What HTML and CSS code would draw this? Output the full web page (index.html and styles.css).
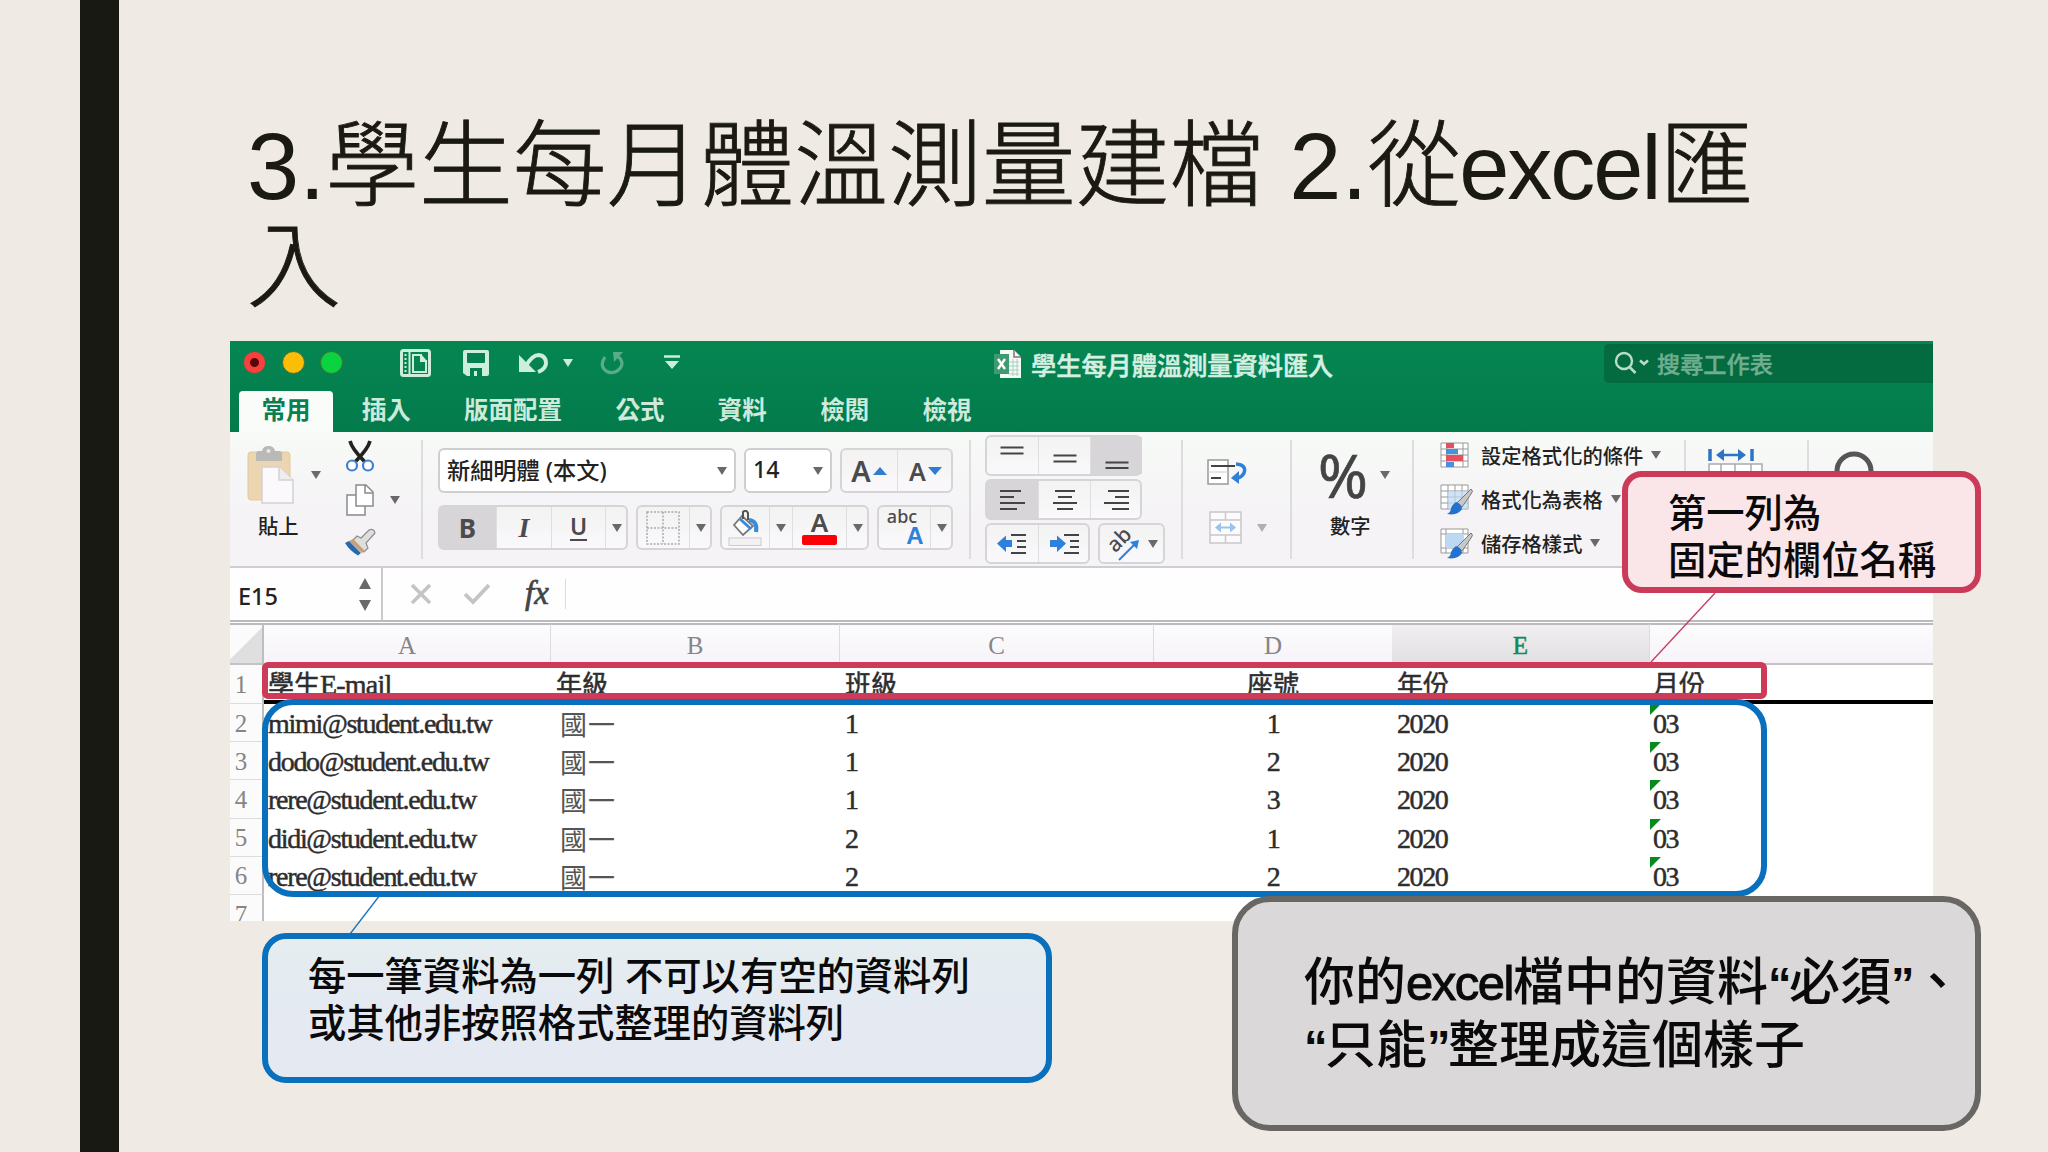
FILE: index.html
```html
<!DOCTYPE html>
<html lang="zh-Hant">
<head>
  <meta charset="UTF-8">
  <meta name="viewport" content="width=device-width, initial-scale=1.0">
  <title>學生每月體溫測量建檔</title>
  <link rel="stylesheet" href="styles.css">
</head>
<body>
  <div class="slide">
    <div class="side-bar"></div>
    <div class="content">
      <h1><span class="digit">3.</span>學生每月體溫測量建檔 <span class="digit">2.</span>從<span class="latin">excel</span>匯<br>入</h1>

      <div class="excel">
        <div class="titlebar">
          <div class="quick">
            <span class="light red"></span>
            <span class="light yellow"></span>
            <span class="light green"></span>
            <svg class="q-side" width="31" height="28" viewBox="0 0 31 28"><rect x="1.5" y="1.5" width="28" height="25" rx="2" fill="none" stroke="#cdeedd" stroke-width="3"/><path d="M9.5 2v24" stroke="#cdeedd" stroke-width="2"/><path d="M5.5 5v19" stroke="#cdeedd" stroke-width="2" stroke-dasharray="2 2"/><path d="M13 6h8v6h5v11H13z" fill="none" stroke="#cdeedd" stroke-width="2"/><path d="M21 5l6 7h-6z" fill="#cdeedd"/></svg>
            <svg class="q-save" width="28" height="28" viewBox="0 0 28 28"><path d="M3 1h22q2 0 2 2v22q0 2-2 2H5l-4-3V3q0-2 2-2z" fill="#cdeedd"/><path d="M5 4h18v9q0 1-1 1H6q-1 0-1-1z" fill="#04804f"/><path d="M8 19h12v8h-5v-5h-3v5H8z" fill="#04804f"/></svg>
            <svg class="q-undo" width="31" height="22" viewBox="0 0 31 22"><path d="M1 3v17h17z" fill="#cdeedd"/><path d="M8 14Q14 3 21 3q7 1 7 8 0 6-8 9" fill="none" stroke="#cdeedd" stroke-width="4"/></svg>
            <i class="caret light-caret"></i>
            <svg class="q-redo" width="24" height="26" viewBox="0 0 24 26"><path d="M5 7q-5 7-1 12 4 5 11 3 7-3 7-9-1-5-5-7" fill="none" stroke="#57ad86" stroke-width="3.2"/><path d="M13 2h10l-9 10z" fill="#57ad86"/></svg>
            <svg class="q-more" width="16" height="15" viewBox="0 0 16 15"><path d="M0 1.5h16" stroke="#cdeedd" stroke-width="2.5"/><path d="M1 6h14l-7 8z" fill="#cdeedd"/></svg>
          </div>
          <div class="doc-title">
            <svg width="28" height="28" viewBox="0 0 28 28"><path d="M6 0h14l7 7v21H6z" fill="#f4fbf7"/><path d="M20 0v7h7" fill="none" stroke="#8a6f7c" stroke-width="1.5"/><path d="M15 12h10M15 16h10M15 20h10M15 24h10M19 9v17M23 9v17" stroke="#a9cdbb"/><rect y="4" width="15" height="20" fill="#3f9a72"/><path d="M4 9l7 10M11 9L4 19" stroke="#fff" stroke-width="2.4"/></svg>
            <span>學生每月體溫測量資料匯入</span>
          </div>
          <div class="search">
            <svg width="36" height="24" viewBox="0 0 36 24"><circle cx="10" cy="10" r="8" fill="none" stroke="#b9dccb" stroke-width="2.4"/><path d="M15.5 16l6 6M26 9.5l4 3.5 4-3.5" fill="none" stroke="#b9dccb" stroke-width="2.6"/></svg>
            <span>搜尋工作表</span>
          </div>
        </div>
        <div class="tabs">
          <span class="tab active">常用</span>
          <span class="tab">插入</span>
          <span class="tab">版面配置</span>
          <span class="tab">公式</span>
          <span class="tab">資料</span>
          <span class="tab">檢閱</span>
          <span class="tab">檢視</span>
        </div>

        <div class="ribbon">
          <div class="group paste-group">
            <div class="big-button">
              <div class="big-icon">
                <svg width="48" height="60" viewBox="0 0 48 60"><rect x="2" y="7" width="42" height="48" rx="3" fill="#ecd6b1" stroke="#e3c99c"/><path d="M10 16V9q0-3 3-3h3q1-5 6.5-5T29 6h4q3 0 3 3v7z" fill="#b9bab8"/><circle cx="22.5" cy="6" r="2" fill="#e9e9e9"/><path d="M16 22h17l14 13v23H16z" fill="#fbf9fb" stroke="#d3d1d3" stroke-width="1.5"/><path d="M33 22v13h14" fill="#efedef" stroke="#d3d1d3" stroke-width="1.5"/></svg>
                <i class="caret"></i>
              </div>
              <span>貼上</span>
            </div>
            <div class="clip-tools">
              <svg width="30" height="32" viewBox="0 0 30 32"><path d="M5 1Q7 9 20 22M25 1Q23 9 10 22" fill="none" stroke="#222" stroke-width="3.6"/><circle cx="7" cy="25.5" r="5" fill="#fff" stroke="#3d7fd0" stroke-width="2.2"/><circle cx="23" cy="25.5" r="5" fill="#fff" stroke="#3d7fd0" stroke-width="2.2"/></svg>
              <div class="copy">
                <svg width="30" height="32" viewBox="0 0 30 32"><path d="M2 11h12l6 6v14H2z" fill="#fff" stroke="#8b8b8b" stroke-width="1.5"/><path d="M11 1h10l7 7v14H11z" fill="#fff" stroke="#8b8b8b" stroke-width="1.5"/><path d="M20 1v8h8" fill="none" stroke="#8b8b8b" stroke-width="1.5"/></svg>
                <i class="caret"></i>
              </div>
              <svg width="33" height="28" viewBox="0 0 33 28"><path d="M17 10l8-8q5-2 6 3l-9 10 2 5-4 4L9 12l4-4z" fill="#dededc" stroke="#8c8c8c" stroke-width="1.2"/><path d="M9 11l12 12-3 2L5 13z" fill="#c9a074"/><path d="M5 13l12 12-3 2.5Q6 23 1 15z" fill="#2768ae"/></svg>
            </div>
          </div>

          <div class="group font-group">
            <div class="row">
              <div class="field font-name"><span>新細明體 (本文)</span><i class="caret"></i></div>
              <div class="field font-size"><span>14</span><i class="caret"></i></div>
              <div class="buttons">
                <span class="btn w56"><b class="grow">A</b><i class="up"></i></span>
                <span class="btn w56"><b class="shrink">A</b><i class="down"></i></span>
              </div>
            </div>
            <div class="row">
              <div class="buttons">
                <span class="btn w57 on"><b class="biu">B</b></span>
                <span class="btn w55"><b class="biu italic">I</b></span>
                <span class="btn w54"><b class="biu under">U</b></span>
                <span class="btn drop"><i class="caret"></i></span>
              </div>
              <div class="buttons">
                <span class="btn w52"><svg width="34" height="34" viewBox="0 0 34 34"><path d="M1 1h32v32H1zM17 1v32M1 17h32" fill="none" stroke="#aaa" stroke-width="1.5" stroke-dasharray="2 1.5"/></svg></span>
                <span class="btn drop"><i class="caret"></i></span>
              </div>
              <div class="buttons">
                <span class="btn w48"><svg width="34" height="36" viewBox="0 0 34 36"><rect x="1" y="28" width="32" height="7.5" fill="#f3f2f3" stroke="#ccc"/><path d="M14 6l11 10-10 9L6 15z" fill="#fff" stroke="#777" stroke-width="1.8"/><path d="M15 9V2q3-3 5 1v7" fill="none" stroke="#555" stroke-width="2"/><path d="M12 9l11 10" stroke="#398ada" stroke-width="3"/><path d="M21 10q9 1 7 12" fill="none" stroke="#398ada" stroke-width="4"/></svg></span>
                <span class="btn drop split"><i class="caret"></i></span>
                <span class="btn w54 color"><b>A</b><i></i></span>
                <span class="btn drop"><i class="caret"></i></span>
              </div>
              <div class="buttons">
                <span class="btn w52 phonetic"><span>abc</span><b>A</b></span>
                <span class="btn drop"><i class="caret"></i></span>
              </div>
            </div>
          </div>

          <div class="group align-group">
            <div class="buttons">
              <span class="btn w52"><svg width="26" height="24" viewBox="0 0 26 24"><path d="M1.5 3.5h23M1.5 9.500h23"/></svg></span>
              <span class="btn w52"><svg width="26" height="24" viewBox="0 0 26 24"><path d="M1.5 11.5h23M1.5 17.500h23"/></svg></span>
              <span class="btn w52 on"><svg width="26" height="24" viewBox="0 0 26 24"><path d="M1.5 18.5h23M1.5 24h23"/></svg></span>
            </div>
            <div class="buttons">
              <span class="btn w52 on"><svg width="26" height="24" viewBox="0 0 26 24"><path d="M1 3h21M1 9h14M1 15h25M1 21h17"/></svg></span>
              <span class="btn w52"><svg width="26" height="24" viewBox="0 0 26 24"><path d="M3 3h20M6 9h14M1 15h24M5 21h16"/></svg></span>
              <span class="btn w52"><svg width="26" height="24" viewBox="0 0 26 24"><path d="M4 3h21M11 9h14M0 15h25M8 21h17"/></svg></span>
            </div>
            <div class="row">
              <div class="buttons">
                <span class="btn w52"><svg width="30" height="24" viewBox="0 0 30 24"><path d="M14 3h15M20 9h9M20 15h9M14 21h15"/><path class="blue" d="M0 11.5l9-8v4.5h6v7H9v5z"/></svg></span>
                <span class="btn w52"><svg width="30" height="24" viewBox="0 0 30 24"><path d="M14 3h15M20 9h9M20 15h9M14 21h15"/><path class="blue" d="M16 11.5l-9-8v4.5H0v7h7v5z"/></svg></span>
              </div>
              <div class="buttons">
                <span class="btn w66"><span class="rotate">ab</span><svg width="22" height="22" viewBox="0 0 22 22"><path class="arrow" d="M1 21L17 5"/><path class="blue" d="M21 1l-2 9-7-7z"/></svg><i class="caret"></i></span>
              </div>
            </div>
          </div>

          <div class="group wrap-group">
            <svg width="40" height="26" viewBox="0 0 40 26"><path d="M1 1h20v24H1z" fill="#fff" stroke="#999" stroke-width="1.5"/><path d="M1 13h20" stroke="#ccc"/><path d="M4 7h24M4 19h10" stroke="#444" stroke-width="2"/><path d="M29 5q11 1 8 9-2 4-6 5" fill="none" stroke="#2f80da" stroke-width="3.5"/><path d="M24 19l8-7v13z" fill="#2f80da"/></svg>
            <div class="merge">
              <svg width="33" height="33" viewBox="0 0 33 33"><path d="M1 1h31v31H1zM1 9h31M1 24h31M16.5 1v8M16.5 24v8" fill="#fbfbfc" stroke="#c8c8cb" stroke-width="1.5"/><path d="M9 16.5h15" stroke="#9bc2ea" stroke-width="2"/><path d="M6 16.5l6-5v10zM27 16.5l-6-5v10z" fill="#9bc2ea"/></svg>
              <i class="caret faded"></i>
            </div>
          </div>

          <div class="group number-group">
            <div class="big-icon"><span class="percent">%</span><i class="caret"></i></div>
            <span>數字</span>
          </div>

          <div class="group style-group">
            <div class="style-item">
              <svg width="33" height="32" viewBox="0 0 33 32"><path d="M1 4h27v24H1zM1 10h27M1 16h27M1 22h27M7 4v24M23 4v24" fill="#fff" stroke="#999"/><path d="M6 4h8v5H6zM6 16h17v6H6z" fill="#e4505c"/><path d="M6 10h12v5H6zM6 23h8v5H6z" fill="#4b8de0"/></svg>
              <span>設定格式化的條件</span><i class="caret"></i>
            </div>
            <div class="style-item">
              <svg width="33" height="32" viewBox="0 0 33 32"><path d="M1 2h27v24H1zM1 8h27M1 14h27M1 20h27M8 2v24M15 2v24M22 2v24" fill="#fff" stroke="#999"/><path d="M8 8h20v18H8z" fill="#bcd8f3" fill-opacity=".7"/><path d="M31 6q3 2 0 5L22 24l-5-4z" fill="#c8c8c8" stroke="#777"/><path d="M16 19q6 2 6 7-4 7-15 5 4-2 4-6 2-4 5-6z" fill="#2372cf"/></svg>
              <span>格式化為表格</span><i class="caret"></i>
            </div>
            <div class="style-item">
              <svg width="33" height="32" viewBox="0 0 33 32"><path d="M1 2h27v24H1zM1 7h27M1 21h27M6 2v24M23 2v24" fill="#fff" stroke="#999"/><path d="M6 7h18v14H6z" fill="#bcd8f3"/><path d="M31 6q3 2 0 5L22 24l-5-4z" fill="#c8c8c8" stroke="#777"/><path d="M16 19q6 2 6 7-4 7-15 5 4-2 4-6 2-4 5-6z" fill="#2372cf"/></svg>
              <span>儲存格樣式</span><i class="caret"></i>
            </div>
          </div>

          <div class="group cell-group">
            <svg width="56" height="30" viewBox="0 0 56 30"><path d="M2 0v12M44 0v12" stroke="#2e74c4" stroke-width="3.5"/><path d="M14 6h20" stroke="#2e74c4" stroke-width="2.5"/><path d="M8 6l8-6v12zM38 6l-8-6v12z" fill="#2e74c4"/><path d="M1 15h53v15H1zM13 15v15M27 15v15M43 15v15" fill="#fff" stroke="#aaa" stroke-width="1.5"/></svg>
          </div>
          <div class="group edit-group">
            <svg width="40" height="44" viewBox="0 0 40 44"><circle cx="20" cy="20" r="17" fill="none" stroke="#555" stroke-width="5"/></svg>
          </div>
        </div>

        <div class="formula-bar">
          <div class="name-box"><span>E15</span><div class="stepper"><i class="step-up"></i><i class="step-down"></i></div></div>
          <svg width="22" height="22" viewBox="0 0 22 22"><path d="M2 2l18 18M20 2L2 20" stroke="#c5c3c5" stroke-width="3.5"/></svg>
          <svg class="check" width="26" height="22" viewBox="0 0 26 22"><path d="M1 11l8 8L25 2" fill="none" stroke="#c5c3c5" stroke-width="3.8"/></svg>
          <span class="fx">fx</span>
        </div>

        <table class="sheet">
          <colgroup><col class="c-num"><col class="c-a"><col class="c-b"><col class="c-c"><col class="c-d"><col class="c-e"><col></colgroup>
          <thead>
            <tr><th class="corner"></th><th>A</th><th>B</th><th>C</th><th class="no-line">D</th><th class="selected">E</th><th></th></tr>
          </thead>
          <tbody>
            <tr class="names"><th>1</th><td>學生<span class="mail">E-mail</span></td><td>年級</td><td>班級</td><td class="mid">座號</td><td>年份</td><td>月份</td></tr>
            <tr><th>2</th><td>mimi@student.edu.tw</td><td class="grade">國一</td><td>1</td><td class="mid">1</td><td>2020</td><td class="flag">03</td></tr>
            <tr><th>3</th><td>dodo@student.edu.tw</td><td class="grade">國一</td><td>1</td><td class="mid">2</td><td>2020</td><td class="flag">03</td></tr>
            <tr><th>4</th><td>rere@student.edu.tw</td><td class="grade">國一</td><td>1</td><td class="mid">3</td><td>2020</td><td class="flag">03</td></tr>
            <tr><th>5</th><td>didi@student.edu.tw</td><td class="grade">國一</td><td>2</td><td class="mid">1</td><td>2020</td><td class="flag">03</td></tr>
            <tr><th>6</th><td>rere@student.edu.tw</td><td class="grade">國一</td><td>2</td><td class="mid">2</td><td>2020</td><td class="flag">03</td></tr>
            <tr><th>7</th><td></td><td></td><td></td><td></td><td></td><td></td></tr>
          </tbody>
        </table>
      </div>
    </div>

    <!-- annotations laid over the sheet -->
    <svg class="leaders" width="2048" height="1152" viewBox="0 0 2048 1152">
      <path d="M1715 593L1651 662" stroke="#c53d5c" stroke-width="1.3"/>
      <path d="M380 895L350 934" stroke="#1a74bb" stroke-width="1.3"/>
    </svg>
    <div class="frame frame-red"></div>
    <div class="frame frame-blue"></div>
    <div class="callout callout-red">第一列為<br>固定的欄位名稱</div>
    <div class="callout callout-blue">每一筆資料為一列 不可以有空的資料列<br>或其他非按照格式整理的資料列</div>
    <div class="callout callout-gray">你的<span class="latin">excel</span>檔中的資料<q>“</q>必須<q>”</q>、<br><q>“</q>只能<q>”</q>整理成這個樣子</div>
  </div>
</body>
</html>
```
FILE: styles.css
```css
* {
  box-sizing: border-box;
}
body {
  margin: 0;
  font-family: "Noto Sans", "Noto Sans CJK TC", sans-serif;
}
.slide {
  position: relative;
  display: flex;
  width: 2048px;
  height: 1152px;
  padding-left: 80px;
  background: #efebe4;
  overflow: hidden;
}
.side-bar {
  width: 39px;
  background: #171912;
}
.content {
  padding: 117px 0 0 111px;
}
h1 {
  height: 224px;
  margin: 0;
  padding-left: 17px;
  font-family: "Liberation Sans", "Noto Sans CJK TC", sans-serif;
  font-size: 93.8px;
  font-weight: 300;
  line-height: 100px;
  color: #1b1a12;
  white-space: nowrap;
  -webkit-text-stroke: 0.9px #1b1a12;
}
h1 .digit {
  -webkit-text-stroke: 0;
}
h1 .latin {
  margin-left: -2px;
  font-size: 90px;
  letter-spacing: -2px;
  -webkit-text-stroke: 0;
}

/* Excel window */
.excel {
  width: 1703px;
  height: 580px;
  background: #fff;
  overflow: hidden;
}
.titlebar {
  display: flex;
  height: 50px;
  background: linear-gradient(#048651, #04804f);
  color: #d5efe2;
}
.quick {
  display: flex;
  align-items: center;
  width: 764px;
  padding: 0 0 7px 13px;
}
.light {
  width: 23px;
  height: 23px;
  margin-right: 15.5px;
  border-radius: 50%;
  border: 1px solid #39713c;
}
.red {
  background: radial-gradient(circle, #5c0508 4px, #f8403f 5px);
}
.yellow {
  background: #fcbd07;
}
.green {
  background: #0ad33f;
}
.q-side {
  margin-left: 41px;
}
.q-save {
  margin-left: 31px;
}
.q-undo {
  margin-left: 28px;
}
.light-caret {
  margin-left: 14px;
}
.q-redo {
  margin-left: 27px;
}
.q-more {
  margin-left: 40px;
}
.doc-title {
  display: flex;
  align-items: center;
  gap: 9px;
  width: 610px;
  padding-bottom: 4px;
  font-size: 25.2px;
  font-weight: 500;
  -webkit-text-stroke: 0.5px #d5efe2;
}
.search {
  display: flex;
  align-items: center;
  gap: 7px;
  flex: 1;
  height: 39px;
  margin-top: 3px;
  padding: 0 0 2px 10px;
  border-radius: 5px 0 0 5px;
  background: #046a40;
  color: #6fae90;
  font-size: 23.2px;
  font-weight: 500;
  -webkit-text-stroke: 0.4px #6fae90;
}
.tabs {
  display: flex;
  height: 41px;
  padding-left: 9px;
  background: linear-gradient(#04804f, #047a4b);
  color: #cdeadc;
}
.tab {
  padding: 0 26.7px;
  font-size: 24.5px;
  font-weight: 700;
  line-height: 37px;
}
.tab.active {
  padding: 0 22.5px;
  margin-right: 2px;
  border-radius: 4px 4px 0 0;
  background: #f9fcf9;
  color: #0a7f50;
}

.ribbon {
  display: flex;
  height: 136px;
  border-bottom: 2px solid #cfcdcf;
  background: linear-gradient(#f7faf7, #f5f3f6 60%);
  color: #222;
  font-size: 20.3px;
  font-weight: 500;
}
.group {
  display: flex;
  flex-shrink: 0;
  position: relative;
}
.group + .group::before {
  content: "";
  position: absolute;
  left: 0;
  top: 8px;
  width: 1.5px;
  height: 119px;
  background: #dddcde;
}
.caret {
  border: 5px solid transparent;
  border-top: 8px solid #6a696a;
  border-bottom: 0;
}
.light-caret {
  border-top-color: #cdeedd;
}
.faded {
  opacity: 0.5;
}
.row {
  display: flex;
  gap: 8px;
}
.paste-group {
  width: 191px;
  padding: 8px 0 0 16px;
}
.big-button, .number-group {
  display: flex;
  flex-direction: column;
}
.big-button {
  width: 99px;
  padding-top: 5px;
}
.big-button > span {
  padding-left: 12px;
  line-height: 42px;
}
.big-icon {
  display: flex;
  align-items: center;
  gap: 17px;
  height: 60px;
}
.clip-tools {
  display: flex;
  flex-direction: column;
  gap: 12px;
}
.clip-tools > svg:last-child {
  margin-left: -1px;
}
.clip-tools svg {
  display: block;
}
.copy {
  display: flex;
  align-items: center;
  gap: 15px;
}
.font-group {
  flex-direction: column;
  gap: 12px;
  width: 548px;
  padding: 16px 0 0 17px;
}
.field {
  display: flex;
  align-items: center;
  justify-content: space-between;
  height: 45px;
  padding: 0 7px 3px 7px;
  border: 2px solid #cfced0;
  border-radius: 6px;
  background: #fff;
  color: #222;
  font-size: 23.2px;
}
.field .caret {
  margin-top: 3px;
}
.font-name {
  width: 298px;
}
.font-size {
  width: 88px;
}
.buttons {
  display: flex;
  height: 45px;
  border: 2px solid #d5d4d6;
  border-radius: 6px;
  background: linear-gradient(#f3f3f2, #faf8fb);
}
.btn {
  position: relative;
  display: flex;
  align-items: center;
  justify-content: center;
  border-left: 1.5px solid #dfdee0;
  color: #4b4a4c;
}
.btn:first-child {
  border-left: 0;
  margin-left: -1px;
}
.btn:last-child {
  margin-right: -2px;
}
.on {
  background: #d7d5d8;
}
.w48 { width: 48px; }
.w52 { width: 52px; }
.w54 { width: 54px; }
.w55 { width: 55px; }
.w56 { width: 56px; }
.w57 { width: 57px; }
.w66 { width: 66px; }
.drop {
  width: 23px;
}
.split {
  margin-right: 0;
}
.grow {
  font-size: 29px;
  font-weight: 600;
}
.shrink {
  font-size: 25px;
  font-weight: 600;
}
.up, .down {
  margin-left: 2px;
  border: 7px solid transparent;
  border-top: 0;
  border-bottom: 8px solid #2f7cd2;
}
.down {
  border-top: 8px solid #2f7cd2;
  border-bottom: 0;
}
.biu {
  font-size: 26px;
  line-height: 1;
}
.italic {
  font-family: "Liberation Serif", serif;
  font-size: 28px;
  font-style: italic;
}
.under {
  height: 26px;
  border-bottom: 2px solid #4b4a4c;
  font-size: 23px;
  font-weight: 600;
}
.color {
  flex-direction: column;
  gap: 1px;
}
.color b {
  font-size: 26px;
  font-weight: 600;
  line-height: 24px;
}
.color i {
  width: 35px;
  height: 10px;
  border-radius: 2px;
  background: #fb0007;
}
.phonetic {
  flex-direction: column;
}
.phonetic span {
  margin-left: -4px;
  font-size: 18px;
  line-height: 17px;
}
.phonetic b {
  margin: 0 0 0 22px;
  color: #2f80da;
  font-family: "Liberation Sans", sans-serif;
  font-size: 24px;
  line-height: 22px;
}
.align-group {
  flex-direction: column;
  gap: 3px;
  width: 212px;
  padding: 3px 0 0 16px;
}
.align-group .buttons {
  height: 41px;
  align-self: flex-start;
}
.align-group path {
  fill: none;
  stroke: #444;
  stroke-width: 2;
}
.align-group .blue {
  fill: #2f80da;
  stroke: none;
}
.align-group svg {
  overflow: visible;
}
.align-group .arrow {
  stroke: #2f80da;
}
.rotate {
  margin: -9px -13px 0 0;
  font-size: 21px;
  line-height: 24px;
  transform: rotate(-45deg);
}
.w66 svg {
  margin-top: 12px;
}
.w66 .caret {
  margin-left: 8px;
}
.wrap-group {
  flex-direction: column;
  gap: 26px;
  width: 109px;
  padding: 27px 0 0 26px;
}
.merge {
  display: flex;
  align-items: center;
  gap: 15px;
  padding-left: 2px;
}
.number-group {
  width: 122px;
  padding: 13px 0 0 28px;
}
.number-group > span {
  padding-left: 12px;
  line-height: 42px;
}
.number-group .big-icon {
  gap: 12px;
}
.percent {
  width: 50px;
  font-family: "Noto Sans", sans-serif;
  font-size: 60px;
  font-weight: 400;
  line-height: 58px;
  color: #444;
  -webkit-text-stroke: 0.6px #444;
}
.style-group {
  flex-direction: column;
  gap: 12px;
  width: 272px;
  padding: 7px 0 0 28px;
}
.style-item {
  display: flex;
  align-items: center;
  gap: 8px;
  height: 32px;
}
.cell-group {
  width: 123px;
  padding: 17px 0 0 24px;
}
.edit-group {
  padding: 19px 0 0 27px;
}

.formula-bar {
  display: flex;
  align-items: center;
  height: 54px;
  border-bottom: 2px solid #bcbabd;
  background: #fefefe;
}
.name-box {
  display: flex;
  align-items: center;
  justify-content: space-between;
  width: 153px;
  height: 52px;
  margin-right: 27px;
  padding: 0 10px 0 8px;
  border-right: 2px solid #cccacc;
  color: #222;
  font-size: 23.5px;
  font-weight: 500;
}
.name-box span {
  padding-top: 3px;
}
.stepper {
  display: flex;
  flex-direction: column;
  gap: 11px;
}
.step-up, .step-down {
  border: 6px solid transparent;
  border-top: 0;
  border-bottom: 11px solid #6a696a;
}
.step-down {
  border-top: 11px solid #6a696a;
  border-bottom: 0;
}
.check {
  margin-left: 32px;
}
.fx {
  width: 41px;
  height: 30px;
  margin-left: 35px;
  border-right: 1.5px solid #dddbdd;
  font-family: "Liberation Serif", serif;
  font-size: 33px;
  font-style: italic;
  font-weight: 400;
  line-height: 28px;
  color: #444;
  -webkit-text-stroke: 0.7px #444;
}

.sheet {
  width: 1703px;
  margin-top: 1px;
  border-collapse: separate;
  border-spacing: 0;
  table-layout: fixed;
  font-family: "Liberation Serif", "Noto Sans CJK TC", serif;
  font-size: 28px;
  color: #2e2d2e;
}
.c-num { width: 34px; }
.c-a { width: 287px; }
.c-b { width: 289px; }
.c-c { width: 314px; }
.c-d { width: 238px; }
.c-e { width: 258px; }
.sheet tr {
  height: 38.2px;
}
.sheet th {
  padding: 0;
  font-size: 25px;
  font-weight: 400;
  color: #868487;
}
.sheet thead th {
  height: 42px;
  padding-top: 4px;
  border-top: 2px solid #bcbabd;
  border-right: 1.5px solid #dddbde;
  border-bottom: 2px solid #c4c2c5;
  background: linear-gradient(#fcfbfd, #f6f4f8);
  line-height: 34px;
}
.sheet thead th.corner {
  border-right: 2px solid #bfbdc0;
  background: linear-gradient(135deg, #fbfbfb 50%, #dedfde 50%);
}
.sheet thead th:last-child, .sheet thead th.no-line {
  border-right: 0;
}
.sheet thead th.selected {
  background: linear-gradient(#f1eff2, #e1dfe2);
  color: #108a5a;
  -webkit-text-stroke: 0.5px #108a5a;
}
.sheet tbody th {
  border-right: 2px solid #bfbdc0;
  border-bottom: 1.5px solid #dcdcdc;
  background: #fafbfa;
  line-height: 34px;
  padding: 2px 10px 0 0;
}
.sheet td {
  padding: 2px 0 0 5px;
  line-height: 34px;
  letter-spacing: -1.4px;
  white-space: nowrap;
  -webkit-text-stroke: 0.5px #2e2d2e;
}
.sheet td:nth-child(2) {
  padding-left: 4px;
  letter-spacing: -1.3px;
}
.sheet .names td {
  height: 39px;
  border-bottom: 4px solid #000;
  padding-top: 8px;
  font-size: 26px;
  line-height: 26px;
  letter-spacing: 0;
  vertical-align: top;
}
.names .mail {
  font-size: 28px;
  line-height: 20px;
  letter-spacing: -0.8px;
}
.sheet .mid {
  padding-left: 0;
  text-align: center;
}
.sheet .grade {
  padding: 6px 0 0 9px;
  font-size: 27px;
  font-weight: 400;
  line-height: 30px;
  letter-spacing: 1px;
  color: #555;
  -webkit-text-stroke: 0;
}
.flag {
  background: linear-gradient(135deg, #078a1c 7.5px, transparent 8px) no-repeat;
}
.sheet td:last-child {
  padding-left: 3px;
}

/* annotations */
.leaders {
  position: absolute;
  left: 0;
  top: 0;
}
.frame, .callout {
  position: absolute;
  border: 6px solid;
}
.frame-red {
  left: 262px;
  top: 662px;
  width: 1505px;
  height: 37px;
  border-color: #cd3b58;
  border-radius: 6px;
}
.frame-blue {
  left: 262px;
  top: 699px;
  width: 1505px;
  height: 198px;
  border-color: #0870bd;
  border-radius: 31px;
}
.callout {
  font-family: "Liberation Sans", "Noto Sans CJK TC", sans-serif;
  font-size: 38.3px;
  font-weight: 500;
  line-height: 47px;
  color: #0a0a0a;
  white-space: nowrap;
}
.callout-red {
  left: 1622px;
  top: 471px;
  width: 359px;
  height: 122px;
  padding: 13px 0 0 40px;
  border-color: #cb3a58;
  border-radius: 20px;
  background: #fae6e9;
}
.callout-blue {
  left: 262px;
  top: 933px;
  width: 790px;
  height: 150px;
  padding: 14px 0 0 40px;
  border-color: #0870bd;
  border-radius: 24px;
  background: linear-gradient(#e5edef, #e4e9f2 60%);
}
.callout-gray {
  left: 1232px;
  top: 896px;
  width: 749px;
  height: 235px;
  padding: 50px 0 0 66px;
  border-color: #686764;
  border-radius: 38px;
  background: #dad8d8;
  font-size: 51px;
  line-height: 62px;
}
.callout-gray .latin {
  font-size: 49px;
  letter-spacing: -1.5px;
  -webkit-text-stroke: 1px #0a0a0a;
}
q {
  quotes: none;
  font-size: 47px;
  font-weight: 700;
  letter-spacing: -2.5px;
}
```
